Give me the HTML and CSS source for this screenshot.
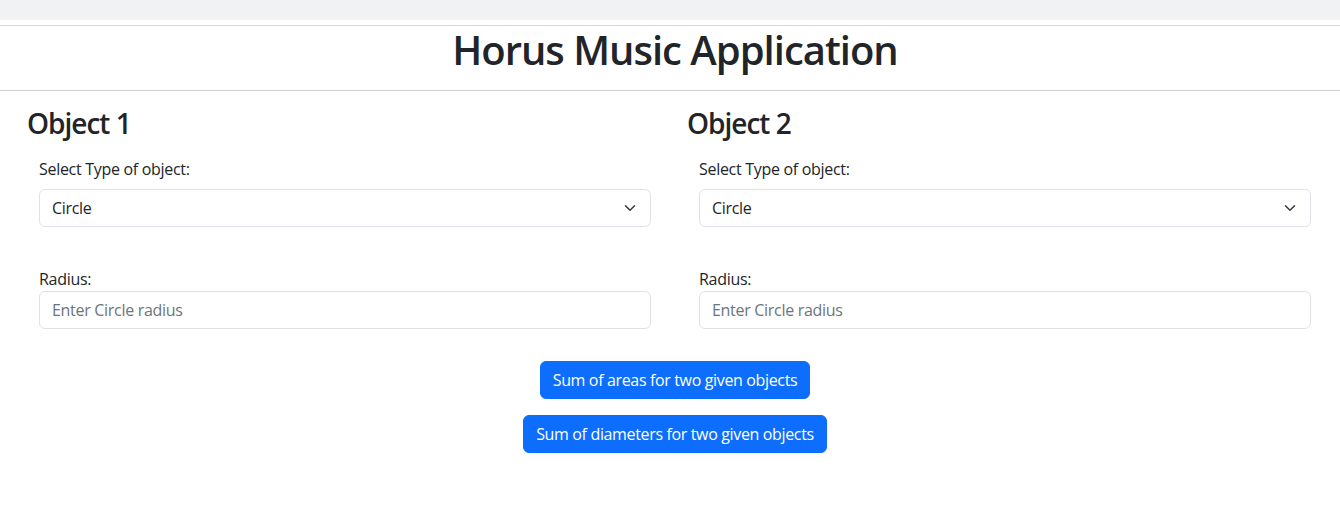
FILE: index.html
```html
<!DOCTYPE html>
<html lang="en">
<head>
<meta charset="utf-8">
<title>Horus Music Application</title>
<link rel="stylesheet" href="styles.css">
</head>
<body>
<div class="topbar"></div>
<header class="app-header">
  <h1 class="app-title">Horus Music Application</h1>
</header>
<main class="main">
  <div class="row">
    <section class="col">
      <h3 class="obj-title">Object 1</h3>
      <div class="group">
        <label class="form-label">Select Type of object:</label>
        <div class="select">
          <span>Circle</span>
          <svg class="chev" viewBox="0 0 12 8" width="12" height="8"><path d="M1.5 1.75L6 6.25L10.5 1.75" fill="none" stroke="#343a40" stroke-width="1.5" stroke-linecap="round" stroke-linejoin="round"/></svg>
        </div>
      </div>
      <div class="group group-radius">
        <label class="plain-label">Radius:</label>
        <div class="input placeholder">Enter Circle radius</div>
      </div>
    </section>
    <section class="col">
      <h3 class="obj-title">Object 2</h3>
      <div class="group">
        <label class="form-label">Select Type of object:</label>
        <div class="select">
          <span>Circle</span>
          <svg class="chev" viewBox="0 0 12 8" width="12" height="8"><path d="M1.5 1.75L6 6.25L10.5 1.75" fill="none" stroke="#343a40" stroke-width="1.5" stroke-linecap="round" stroke-linejoin="round"/></svg>
        </div>
      </div>
      <div class="group group-radius">
        <label class="plain-label">Radius:</label>
        <div class="input placeholder">Enter Circle radius</div>
      </div>
    </section>
  </div>
  <div class="actions">
    <button class="btn">Sum of areas for two given objects</button>
    <button class="btn">Sum of diameters for two given objects</button>
  </div>
</main>
</body>
</html>
```

FILE: styles.css
```css
* { box-sizing: border-box; }
html, body { margin: 0; padding: 0; }
body {
  font-family: "Open Sans", "Noto Sans", sans-serif;
  font-size: 16px;
  line-height: 24px;
  letter-spacing: -0.3px;
  color: #212529;
  background: #fff;
  width: 1340px;
  overflow: hidden;
}
.topbar {
  height: 20px;
  background: #f1f2f4;
}
.app-header {
  margin-top: 5px;
  border-top: 1px solid #d6d6d6;
  border-bottom: 1px solid #cfcfcf;
  padding-left: 10px;
}
.app-title {
  margin: 0;
  padding: 0 0 16px;
  text-align: center;
  font-size: 40px;
  line-height: 48px;
  font-weight: 600;
  letter-spacing: -1px;
}
.main {
  margin-left: 15px;
  width: 1320px;
}
.row {
  display: flex;
}
.col {
  flex: 1 1 0;
  padding: 15px 12px 0;
}
.obj-title {
  margin: 0 0 17px;
  font-size: 28px;
  line-height: 34px;
  font-weight: 600;
  letter-spacing: -1px;
}
.group {
  padding: 0 12px;
}
.form-label {
  display: block;
  margin-bottom: 8px;
}
.plain-label {
  display: block;
}
.group-radius {
  margin-top: 40px;
}
.select, .input {
  height: 38px;
  border: 1px solid #dee2e6;
  border-radius: 6px;
  padding: 6px 12px;
  display: flex;
  align-items: center;
  justify-content: space-between;
  background: #fff;
}
.placeholder { color: #6c757d; }
.chev { display: block; margin-right: 2px; }
.actions {
  display: flex;
  flex-direction: column;
  align-items: center;
  gap: 16px;
  padding-top: 32px;
}
.btn {
  font-family: inherit;
  font-size: 16px;
  line-height: 24px;
  letter-spacing: -0.35px;
  color: #fff;
  background: #0d6efd;
  border: 1px solid #0d6efd;
  border-radius: 6px;
  padding: 6px 12px;
}
```
